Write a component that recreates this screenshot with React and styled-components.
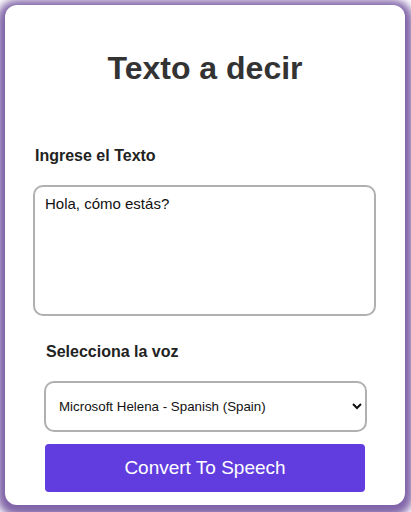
import React, { useState } from "react";
import styled, { createGlobalStyle } from "styled-components";

const GlobalStyle = createGlobalStyle`
  html, body {
    margin: 0;
    padding: 0;
    background: #ffffff;
    font-family: "Liberation Sans", Arial, sans-serif;
  }
`;

const voices = [
  "Microsoft Helena - Spanish (Spain)",
  "Microsoft Laura - Spanish (Spain)",
  "Microsoft Pablo - Spanish (Spain)",
];

const App = () => {
  const [text, setText] = useState("Hola, cómo estás?");
  const [voice, setVoice] = useState(voices[0]);

  return (
    <Page>
      <GlobalStyle />
      <Card>
        <Title>Texto a decir</Title>
        <Label htmlFor="texto" $left={30} $top={60}>
          Ingrese el Texto
        </Label>
        <TextArea id="texto" value={text} onChange={(e) => setText(e.target.value)} />
        <Label htmlFor="voz" $left={41} $top={27}>
          Selecciona la voz
        </Label>
        <Select id="voz" value={voice} onChange={(e) => setVoice(e.target.value)}>
          {voices.map((v) => (
            <option key={v} value={v}>
              {v}
            </option>
          ))}
        </Select>
        <SpeakButton type="button">Convert To Speech</SpeakButton>
      </Card>
    </Page>
  );
};

export default App;

const Page = styled.div`
  padding: 5px 6px 7px 5px;
`;

const Card = styled.div`
  width: 400px;
  height: 500px;
  box-sizing: border-box;
  background: #ffffff;
  border-radius: 12px;
  box-shadow: 0 3px 8px 8px rgba(128, 100, 168, 1);
  display: flex;
  flex-direction: column;
  padding-top: 45px;
`;

const Title = styled.h1`
  margin: 0;
  font-size: 32px;
  line-height: 37px;
  font-weight: 700;
  color: #333333;
  text-align: center;
`;

const Label = styled.label`
  display: block;
  margin: ${(p) => p.$top}px 0 0 ${(p) => p.$left}px;
  font-size: 16px;
  line-height: 18px;
  font-weight: 700;
  color: #222222;
`;

const TextArea = styled.textarea`
  display: block;
  box-sizing: border-box;
  width: 343px;
  height: 131px;
  margin: 20px 0 0 28px;
  padding: 8px 10px;
  border: 2px solid #b0b0b0;
  border-radius: 10px;
  font-family: "Liberation Sans", Arial, sans-serif;
  font-size: 15px;
  color: #111111;
  resize: none;
  outline: none;
`;

const Select = styled.select`
  display: block;
  box-sizing: border-box;
  width: 323px;
  height: 51px;
  margin: 20px 0 0 39px;
  padding: 0 8px 0 9px;
  border: 2px solid #b0b0b0;
  border-radius: 10px;
  background: #ffffff;
  font-family: "Liberation Sans", Arial, sans-serif;
  font-size: 13.33px;
  color: #111111;
  outline: none;
`;

const SpeakButton = styled.button`
  display: block;
  width: 320px;
  height: 48px;
  margin: 12px 0 0 40px;
  border: none;
  border-radius: 4px;
  background: #613ddf;
  color: #ffffff;
  font-family: "Liberation Sans", Arial, sans-serif;
  font-size: 19px;
  cursor: pointer;
`;
